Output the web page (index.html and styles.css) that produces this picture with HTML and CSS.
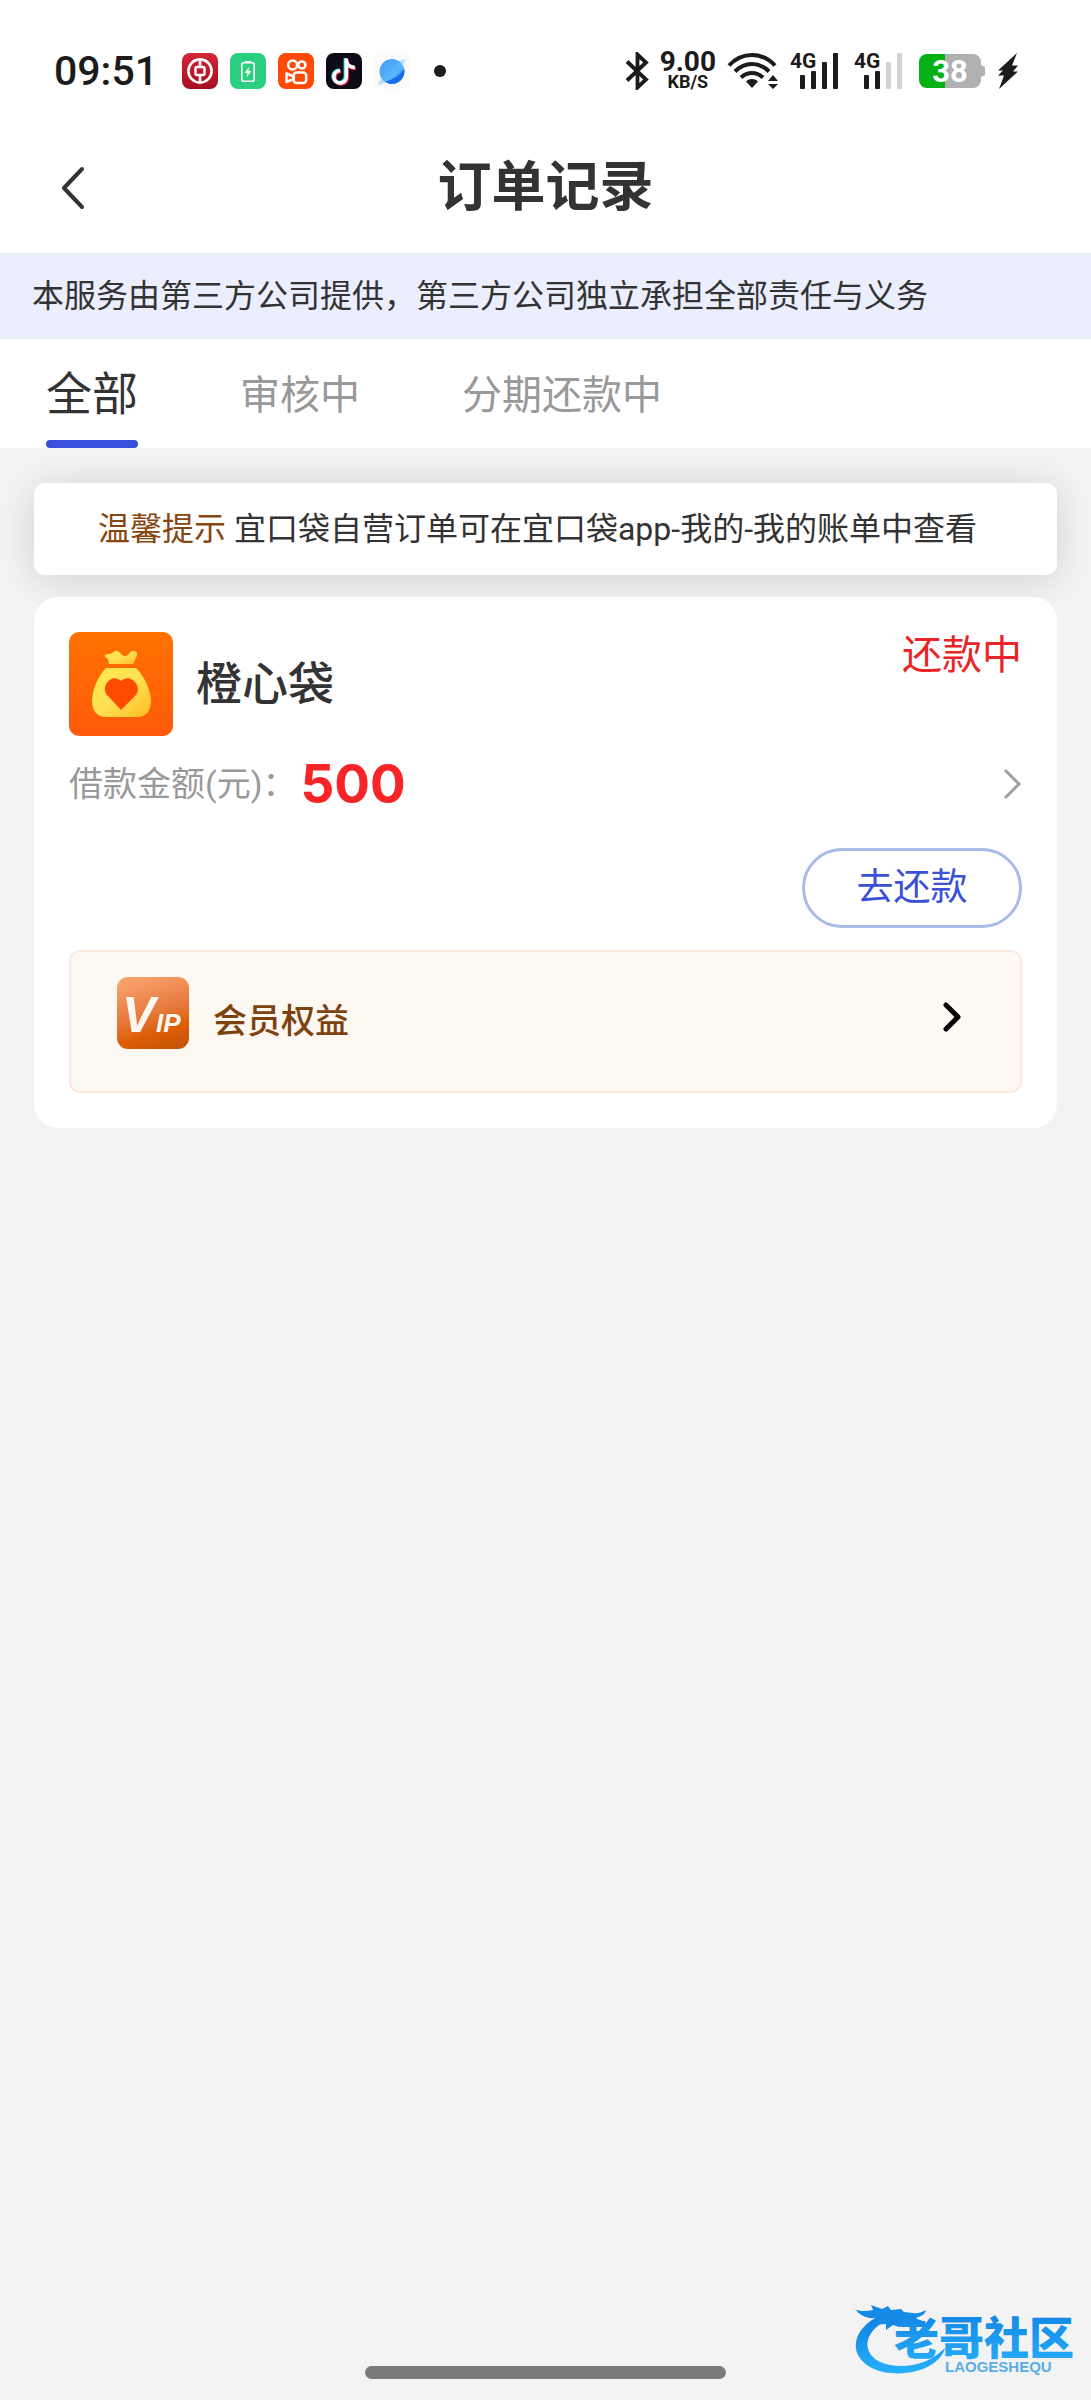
FILE: index.html
```html
<!DOCTYPE html>
<html lang="zh-CN">
<head>
<meta charset="utf-8">
<meta name="viewport" content="width=device-width, initial-scale=1">
<title>订单记录</title>
<link rel="stylesheet" href="styles.css">
</head>
<body>
<div class="page">
  <div class="status-bar">
    <div class="status-left">
      <span class="clock">09:51</span>
      <div class="app-icons">
        <svg class="app-icon" viewBox="0 0 36 36" aria-hidden="true">
          <defs><linearGradient id="bank" x1="0" y1="0" x2="0" y2="1"><stop offset="0" stop-color="#d42636"/><stop offset="1" stop-color="#a50f20"/></linearGradient></defs>
          <rect width="36" height="36" rx="8" fill="url(#bank)"/>
          <circle cx="18" cy="18" r="11.6" fill="none" stroke="#fff" stroke-width="2.6"/>
          <rect x="13.5" y="14" width="9" height="8" rx="1.5" fill="none" stroke="#fff" stroke-width="2.4"/>
          <path d="M18 6v8M18 22v8" stroke="#fff" stroke-width="2.6"/>
        </svg>
        <svg class="app-icon" viewBox="0 0 36 36" aria-hidden="true">
          <rect width="36" height="36" rx="8" fill="#2bcf81"/>
          <rect x="11.8" y="9.8" width="12.4" height="18.4" rx="1.5" fill="none" stroke="#fff" stroke-width="1.6"/>
          <path d="M15 8h6v2h-6z" fill="#fff"/>
          <path d="M19.4 13.5 14.4 20h3l-1 4.500 5-6.500h-3z" fill="#fff"/>
        </svg>
        <svg class="app-icon" viewBox="0 0 36 36" aria-hidden="true">
          <rect width="36" height="36" rx="8" fill="#ff4906"/>
          <g fill="none" stroke="#fff" stroke-width="2.5" stroke-linejoin="round">
            <circle cx="14.600" cy="12" r="4.500"/><circle cx="23.900" cy="12" r="3.600"/>
            <rect x="15.600" y="19.500" width="12.600" height="10.500" rx="3"/>
            <path d="M15.600 23.500 8.500 20.500v8.500l7.100-3z"/>
          </g>
        </svg>
        <svg class="app-icon" viewBox="0 0 36 36" aria-hidden="true">
          <rect width="36" height="36" rx="8" fill="#0c0b17"/>
          <g fill="none" stroke-width="3.400">
            <path d="M19.300 5v18.300a6.200 6.200 0 1 1-6.200-6.200M19.300 7c.6 4.500 3.500 6.800 8.500 7" stroke="#25e8e4"/>
            <path d="M21.300 6.500v18.300a6.200 6.200 0 1 1-6.200-6.200M21.300 8.500c.6 4.500 3.500 6.800 8.500 7" stroke="#fb2855"/>
            <path d="M20.300 5.500v18.300a6.200 6.200 0 1 1-6.200-6.200M20.300 7.500c.6 4.500 3.500 6.800 8.500 7" stroke="#fff"/>
          </g>
        </svg>
        <svg class="app-icon" viewBox="0 0 36 36" aria-hidden="true">
          <defs><linearGradient id="planet" x1="0" y1="0" x2="1" y2="1"><stop offset="0" stop-color="#3f95f8"/><stop offset=".6" stop-color="#5cb6fb"/><stop offset="1" stop-color="#1668e8"/></linearGradient></defs>
          <rect width="36" height="36" rx="8" fill="#fafafb"/>
          <path d="M25 8 31 6l-2 7zM8 23l-4 9 8-2z" fill="#b9e2fb"/>
          <circle cx="18" cy="18.500" r="12.500" fill="url(#planet)"/>
          <path d="M30.300 16c1 8-5 15-12.300 15-3 0-5-1-7-2.500 8-2 14-5.500 19.300-12.500z" fill="#176be6"/>
        </svg>
      </div>
      <span class="more-dot"></span>
    </div>
    <div class="status-right">
      <svg class="bluetooth" viewBox="0 0 24 38" aria-hidden="true"><path d="M2 9.500 21 27.500 12.500 35.500V2.500L21 10.500 2 28.500" fill="none" stroke="#1b1b1b" stroke-width="3.800"/></svg>
      <div class="speed"><span class="speed-value">9.00</span><span class="speed-unit">KB/S</span></div>
      <svg class="wifi" viewBox="0 0 52 38" aria-hidden="true">
        <g fill="none" stroke="#1b1b1b" stroke-width="4"><path d="M2 13.500C15-.5 35-.5 48 13.500"/><path d="M8 19.500c10-10 24-10 34 0"/><path d="M14 25.500c6.500-6 15.500-6 22 0"/></g>
        <path d="M19 29.500c4-3.200 8-3.200 12 0L25 36z" fill="#1b1b1b"/>
        <path d="m46 23 5 6H41zM46 37l-5-5h10z" fill="#1b1b1b"/>
      </svg>
      <svg class="signal" viewBox="0 -6 49 50" aria-hidden="true">
        <text class="signal-text" x="0" y="16">4G</text>
        <g fill="#1b1b1b"><rect x="10" y="23" width="5" height="14" rx="1"/><rect x="21" y="19" width="5" height="18" rx="1"/><rect x="32" y="10" width="5" height="27" rx="1"/><rect x="43" y="1" width="5" height="36" rx="1"/></g>
      </svg>
      <svg class="signal" viewBox="0 -6 49 50" aria-hidden="true">
        <text class="signal-text" x="0" y="16">4G</text>
        <g fill="#1b1b1b"><rect x="10" y="23" width="5" height="14" rx="1"/><rect x="21" y="19" width="5" height="18" rx="1"/></g>
        <g fill="#d2d2d2"><rect x="32" y="10" width="5" height="27" rx="1"/><rect x="43" y="1" width="5" height="36" rx="1"/></g>
      </svg>
      <svg class="battery" viewBox="0 0 68 36" aria-hidden="true">
        <path d="M27 1h28a8 8 0 0 1 8 8v3l4 2v8l-4 2v3a8 8 0 0 1-8 8H27z" fill="#b0b0b0"/>
        <path d="M27 1H9a8 8 0 0 0-8 8v18a8 8 0 0 0 8 8h18z" fill="#07b014"/>
        <text class="battery-text" x="32" y="29" text-anchor="middle">38</text>
      </svg>
      <svg class="bolt" viewBox="0 0 22 38" aria-hidden="true"><path d="M20 1 1 18.500h5L1 23.500h6L2 37l19-17.500h-5l5-6h-6z" fill="#1b1b1b"/></svg>
    </div>
  </div>

  <header class="nav">
    <button class="back" type="button" aria-label="返回"><svg viewBox="0 0 26 44"><path d="M22 3 4 22l18 19" fill="none" stroke="#333" stroke-width="4" stroke-linecap="round" stroke-linejoin="round"/></svg></button>
    <h1 class="nav-title">订单记录</h1>
  </header>

  <p class="disclaimer">本服务由第三方公司提供，第三方公司独立承担全部责任与义务</p>

  <nav class="tabs">
    <a class="tab tab-active" href="#all" aria-current="page">全部</a>
    <a class="tab" href="#review">审核中</a>
    <a class="tab" href="#installment">分期还款中</a>
  </nav>

  <main class="content">
    <p class="tip"><span class="tip-label">温馨提示</span> 宜口袋自营订单可在宜口袋app-我的-我的账单中查看</p>

    <article class="order">
      <div class="order-head">
        <svg class="brand-logo" viewBox="0 0 104 104" aria-hidden="true">
          <defs>
            <linearGradient id="orange" x1="0" y1="0" x2="0" y2="1"><stop offset="0" stop-color="#ff7200"/><stop offset="1" stop-color="#ff5a0a"/></linearGradient>
            <linearGradient id="gold" x1="0" y1="0" x2="1" y2="1"><stop offset="0" stop-color="#ffe94a"/><stop offset=".5" stop-color="#ffe052"/><stop offset="1" stop-color="#ffbd20"/></linearGradient>
          </defs>
          <rect width="104" height="104" rx="10" fill="url(#orange)"/>
          <path d="M36 25c-1-2 1-3 4-3 4 0 5-4 8-3 4 1 4 5 8 5s4-5 8-5c5 0 5 3 3 7l-3 6H40l-1-5z" fill="url(#gold)"/>
          <path d="M37 36h30c8 8 14 20 15 32 0 11-5 17-14 17H37c-9 0-14-6-14-17 1-12 6-24 14-32z" fill="url(#gold)"/>
          <path d="M52 78 39 64c-9-9 4-24 13-15 9-9 23 6 14 15z" fill="#ff4b00"/>
        </svg>
        <h2 class="brand-name">橙心袋</h2>
        <span class="order-status">还款中</span>
      </div>
      <a class="amount-row" href="#order">
        <span class="amount-label">借款金额(元)：</span>
        <strong class="amount">500</strong>
        <svg class="amount-arrow" viewBox="0 0 20 32" aria-hidden="true"><path d="m3 2 14 14L3 30" fill="none" stroke="#a0a0a0" stroke-width="3"/></svg>
      </a>
      <button class="repay" type="button">去还款</button>
      <a class="vip" href="#vip">
        <svg class="vip-logo" viewBox="0 0 72 72" aria-hidden="true">
          <defs><linearGradient id="vipbg" x1=".3" y1="0" x2=".6" y2="1"><stop offset="0" stop-color="#f8a26b"/><stop offset=".5" stop-color="#e77a3e"/><stop offset=".8" stop-color="#dc5c05"/><stop offset="1" stop-color="#c95608"/></linearGradient></defs>
          <rect width="72" height="72" rx="11" fill="url(#vipbg)"/>
          <text class="vip-v" x="5" y="55">V</text><text class="vip-ip" x="39" y="55">IP</text>
        </svg>
        <span class="vip-text">会员权益</span>
        <svg class="vip-arrow" viewBox="0 0 20 32" aria-hidden="true"><path d="m4 4 12 12L4 28" fill="none" stroke="#000" stroke-width="5" stroke-linecap="round" stroke-linejoin="round"/></svg>
      </a>
    </article>
  </main>

  <footer class="home-area"><div class="home-bar"></div></footer>

  <svg class="watermark" viewBox="0 0 230 80" role="img" aria-label="老哥社区 LAOGESHEQU">
    <defs><linearGradient id="sea" x1="0" y1="0" x2="0" y2="1"><stop offset="0" stop-color="#0f7fe0"/><stop offset="1" stop-color="#27b0fb"/></linearGradient></defs>
    <path d="M30 15C-3 30-5 62 32 72c32 6 58-8 62-24C77 65 56 68 39 65 11 60 8 34 36 20z" fill="url(#sea)"/>
    <path d="M3 9c7 3 13 2 19 1l-2-5 11 4 6-3 3 4 10-1 3 3 9 1c5 1 9-1 13-3-1 5-6 7-12 8l9 3 0 4-14-3-10 5-6-2-7 5 0-6-12 1 5-8c-9 3-18 0-24-8z" fill="#168be6"/>
    <text class="mark-name" x="43" y="55" fill="url(#sea)">老哥社区</text>
    <text class="mark-latin" x="94" y="72">LAOGESHEQU</text>
  </svg>
</div>
</body>
</html>
```
FILE: styles.css
```css
* { box-sizing: border-box; }

body {
  margin: 0;
  background: #f3f3f3;
  color: #333;
  font-family: Roboto, "Noto Sans CJK SC", sans-serif;
}

h1, h2, p { margin: 0; }
a { color: inherit; text-decoration: none; }
button { padding: 0; border: 0; background: none; font: inherit; cursor: pointer; }
svg { display: block; flex: none; }

.page {
  position: relative;
  display: flex;
  flex-direction: column;
  min-height: 100vh;
}

/* status bar */
.status-bar {
  display: flex;
  align-items: center;
  justify-content: space-between;
  height: 120px;
  padding: 22px 72px 0 54px;
  background: #fff;
  color: #1b1b1b;
}
.status-left, .status-right, .app-icons { display: flex; align-items: center; }
.clock { font-size: 41px; line-height: 44px; font-weight: 500; }
.app-icons { gap: 12px; margin-left: 24px; }
.app-icon { width: 36px; height: 36px; }
.more-dot { width: 12px; height: 12px; margin-left: 24px; border-radius: 50%; background: #1b1b1b; }
.status-right { gap: 11px; }
.bluetooth { width: 24px; height: 38px; }
.speed {
  display: flex;
  flex-direction: column;
  align-items: center;
  font-weight: 700;
}
.speed-value { font-size: 28px; line-height: 22px; }
.speed-unit { font-size: 18px; line-height: 18px; }
.wifi { width: 52px; height: 38px; }
.signal { width: 49px; height: 50px; margin-right: 4px; }
.signal-text { font: 700 21px Roboto, sans-serif; fill: #1b1b1b; }
.battery { width: 68px; height: 36px; }
.battery-text { font: 700 31px Roboto, sans-serif; fill: #fff; }
.bolt { width: 22px; height: 38px; }

/* title bar */
.nav {
  display: grid;
  grid-template-columns: 1fr auto 1fr;
  align-items: center;
  height: 133px;
  padding: 3px 60px 0;
  background: #fff;
}
.back { justify-self: start; }
.back svg { width: 26px; height: 44px; }
.nav-title { font-size: 54px; line-height: 64px; font-weight: 700; }

.disclaimer {
  padding: 19px 32px;
  background: #eaeefd;
  font-size: 32px;
  line-height: 48px;
}

.tabs {
  display: flex;
  gap: 102px;
  height: 109px;
  padding: 0 46px;
  background: #fff;
}
.tab {
  display: flex;
  align-items: center;
  padding-top: 4px;
  color: #999;
  font-size: 40px;
  line-height: 60px;
}
.tab-active {
  position: relative;
  padding-top: 0;
  color: #333;
  font-size: 46px;
}
.tab-active::after {
  content: "";
  position: absolute;
  right: 0;
  bottom: 0;
  left: 0;
  height: 8px;
  border-radius: 4px;
  background: #3a50dd;
}

/* list */
.content {
  display: flex;
  flex: 1;
  flex-direction: column;
  gap: 22px;
  padding: 35px 34px;
}
.tip {
  padding: 22px 64px;
  border-radius: 11px;
  background: #fff;
  box-shadow: 0 4px 40px rgba(0, 0, 0, 0.14);
  font-size: 32px;
  line-height: 48px;
}
.tip-label { color: #87460f; }

.order {
  position: relative;
  display: flex;
  flex-direction: column;
  padding: 35px;
  border-radius: 24px;
  background: #fff;
}
.order-head { display: flex; align-items: center; gap: 23px; }
.brand-logo { width: 104px; height: 104px; }
.brand-name { font-size: 46px; line-height: 60px; font-weight: 500; }
.order-status {
  align-self: flex-start;
  margin-left: auto;
  color: #eb2427;
  font-size: 40px;
  line-height: 48px;
}
.amount-row { display: flex; align-items: center; gap: 4px; height: 96px; }
.amount-label { color: #999; font-size: 34px; line-height: 48px; }
.amount { color: #f92428; font: 700 53px/64px Inter, sans-serif; }
.amount-arrow { width: 20px; height: 32px; margin-left: auto; }
.repay {
  align-self: flex-end;
  width: 220px;
  height: 80px;
  margin-top: 16px;
  border: 3px solid #abbae8;
  border-radius: 40px;
  color: #3a50d8;
  font-size: 37px;
  line-height: 48px;
}
.vip {
  display: flex;
  align-items: center;
  gap: 24px;
  height: 143px;
  margin-top: 22px;
  padding: 0 58px 18px 46px;
  border: 2px solid #fbe9df;
  border-radius: 11px;
  background: #fdf8f2;
}
.vip-logo { width: 72px; height: 72px; }
.vip-v { font: italic 700 50px "Liberation Sans", sans-serif; fill: #fff8f0; }
.vip-ip { font: italic 700 26px "Liberation Sans", sans-serif; fill: #fff8f0; }
.vip-text { padding-top: 16px; color: #7c430f; font-size: 34px; line-height: 48px; font-weight: 500; }
.vip-arrow { width: 20px; height: 32px; margin: 8px 0 0 auto; }

.home-area { display: flex; justify-content: center; padding: 20px 0 21px; }
.home-bar { width: 33%; height: 13px; border-radius: 7px; background: #7a7a7a; }

.watermark { position: absolute; right: 10px; bottom: 20px; width: 230px; height: 80px; }
.mark-name { font: 900 45px "Noto Sans CJK SC", sans-serif; }
.mark-latin { font: 700 15px "Liberation Sans", sans-serif; fill: #5aaee8; }
```
